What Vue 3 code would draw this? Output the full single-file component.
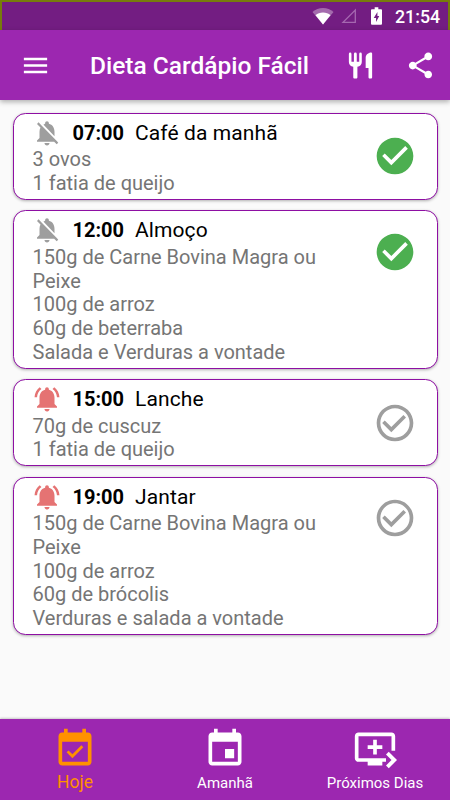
<template>
  <div class="screen">
    <div class="status-bar">
      <svg class="wifi" viewBox="0 0 22 18">
        <path d="M11 17.5L.5 5C3.5 2.200 7 1 11 1s7.500 1.200 10.500 4z" opacity=".35" />
        <path d="M11 17.500L3.500 8.300C5.500 6.500 8 5.500 11 5.500s5.500 1 7.500 2.800z" />
      </svg>
      <svg class="signal" viewBox="0 0 16 16">
        <path d="M14.300 2v12.300H2z" />
      </svg>
      <svg class="battery" viewBox="0 0 12 20">
        <path fill-rule="evenodd" d="M4 0h4v2h3c.6 0 1 .4 1 1v15c0 .6-.4 1-1 1H1c-.6 0-1-.4-1-1V3c0-.6.400-1 1-1h3zM7 5L3 11.500h2.500V16L9 9.500H7z" />
      </svg>
      <span class="clock">21:54</span>
    </div>

    <header class="app-bar">
      <svg class="icon" viewBox="0 0 24 24"><path :d="icons.menu" /></svg>
      <h1>Dieta Cardápio Fácil</h1>
      <svg class="icon food" viewBox="0 0 24 24"><path :d="icons.food" /></svg>
      <svg class="icon share" viewBox="0 0 24 24"><path :d="icons.share" /></svg>
    </header>

    <main class="meals">
      <section
        v-for="meal in meals"
        :key="meal.time"
        class="card"
        :class="{ tall: meal.items.length > 2 }"
      >
        <div class="info">
          <div class="title">
            <svg class="bell" :class="{ active: meal.alarm }" viewBox="0 0 24 24">
              <path :d="meal.alarm ? icons.bellOn : icons.bellOff" />
            </svg>
            <strong>{{ meal.time }}</strong>
            <span>{{ meal.name }}</span>
          </div>
          <p v-for="item in meal.items" :key="item">{{ item }}</p>
        </div>
        <svg class="check" :class="{ done: meal.done }" viewBox="0 0 24 24" @click="meal.done = !meal.done">
          <path :d="meal.done ? icons.checkFull : icons.checkOutline" />
        </svg>
      </section>
    </main>

    <nav class="tabs">
      <button
        v-for="tab in tabs"
        :key="tab.label"
        :class="{ selected: current === tab.label }"
        @click="current = tab.label"
      >
        <svg viewBox="0 0 24 24"><path :d="tab.icon" /></svg>
        <span>{{ tab.label }}</span>
      </button>
    </nav>
  </div>
</template>

<script setup>
import { ref } from 'vue';

const icons = {
  menu: 'M3 18h18v-2H3v2zm0-5h18v-2H3v2zm0-7v2h18V6H3z',
  food: 'M3 3a1 1 0 0 1 2 0v6h1.900V3a1.100 1 0 0 1 2.200 0v6H11V3a1 1 0 0 1 2 0v6.200c0 2-1.400 3.300-3.400 3.700V21c0 .6-.4 1-1 1H7.400c-.6 0-1-.4-1-1v-8.100C4.400 12.500 3 11.200 3 9.200zM16 6c0-2.200 2-4 4.300-4 .4 0 .7.3.7.700V21c0 .6-.4 1-1 1h-.8c-.6 0-1-.4-1-1v-7H16z',
  share: 'M18 16.08c-.76 0-1.44.3-1.96.77L8.91 12.7c.05-.23.09-.46.09-.7s-.04-.47-.09-.7l7.05-4.11c.54.5 1.25.81 2.04.81 1.66 0 3-1.34 3-3s-1.34-3-3-3-3 1.34-3 3c0 .24.04.47.09.7L8.040 9.810C7.500 9.310 6.790 9 6 9c-1.660 0-3 1.340-3 3s1.340 3 3 3c.790 0 1.500-.310 2.040-.810l7.120 4.160c-.05.21-.08.43-.08.65 0 1.610 1.310 2.920 2.920 2.920s2.920-1.310 2.920-2.920-1.310-2.920-2.920-2.920z',
  bellOn: 'M7.58 4.08L6.15 2.65C3.75 4.48 2.17 7.3 2.03 10.5h2c.15-2.65 1.51-4.970 3.550-6.420zm12.390 6.420h2c-.15-3.200-1.730-6.020-4.120-7.850l-1.420 1.430c2.020 1.450 3.390 3.770 3.540 6.420zM18 11c0-3.070-1.640-5.640-4.500-6.320V4c0-.83-.67-1.500-1.500-1.500s-1.500.67-1.500 1.500v.68C7.630 5.360 6 7.920 6 11v5l-2 2v1h16v-1l-2-2v-5zm-6 11c.14 0 .27-.01.400-.040.650-.140 1.180-.580 1.440-1.180.100-.240.150-.500.150-.780h-4c.010 1.100.900 2 2.010 2z',
  bellOff: 'M20 18.69L7.84 6.14 5.27 3.49 4 4.76l2.8 2.8v.01c-.52.99-.8 2.16-.8 3.420v5l-2 2v1h13.730l2 2L21 19.720l-1-1.030zM12 22c1.110 0 2-.890 2-2h-4c0 1.110.890 2 2 2zm6-7.320V11c0-3.080-1.640-5.640-4.500-6.320V4c0-.83-.67-1.500-1.500-1.500s-1.500.67-1.500 1.500v.68c-.15.03-.29.08-.42.12-.1.03-.2.07-.3.11h-.01c-.01 0-.01 0-.02.010-.23.090-.46.200-.68.310 0 0-.01 0-.01.010L18 14.680z',
  checkFull: 'M12 2C6.48 2 2 6.480 2 12s4.480 10 10 10 10-4.480 10-10S17.520 2 12 2zm-2 15l-5-5 1.410-1.410L10 14.170l7.590-7.590L19 8l-9 9z',
  checkOutline: 'M16.590 7.580L10 14.170l-3.590-3.580L5 12l5 5 8-8-1.410-1.420zM12 2C6.480 2 2 6.480 2 12s4.480 10 10 10 10-4.480 10-10S17.520 2 12 2zm0 18c-4.420 0-8-3.580-8-8s3.580-8 8-8 8 3.580 8 8-3.580 8-8 8z'
};

const meals = ref([
  { time: '07:00', name: 'Café da manhã', alarm: false, done: true, items: ['3 ovos', '1 fatia de queijo'] },
  {
    time: '12:00',
    name: 'Almoço',
    alarm: false,
    done: true,
    items: ['150g de Carne Bovina Magra ou Peixe', '100g de arroz', '60g de beterraba', 'Salada e Verduras a vontade']
  },
  { time: '15:00', name: 'Lanche', alarm: true, done: false, items: ['70g de cuscuz', '1 fatia de queijo'] },
  {
    time: '19:00',
    name: 'Jantar',
    alarm: true,
    done: false,
    items: ['150g de Carne Bovina Magra ou Peixe', '100g de arroz', '60g de brócolis', 'Verduras e salada a vontade']
  }
]);

const tabs = [
  {
    label: 'Hoje',
    icon: 'M16.530 11.060L15.470 10l-4.880 4.880-2.120-2.120-1.060 1.060L10.590 17l5.940-5.940zM19 3h-1V1h-2v2H8V1H6v2H5c-1.110 0-1.990.9-1.990 2L3 19c0 1.100.890 2 2 2h14c1.100 0 2-.9 2-2V5c0-1.100-.9-2-2-2zm0 16H5V8h14v11z'
  },
  {
    label: 'Amanhã',
    icon: 'M17 12h-5v5h5v-5zM16 1v2H8V1H6v2H5c-1.110 0-1.990.9-1.990 2L3 19c0 1.100.890 2 2 2h14c1.100 0 2-.9 2-2V5c0-1.100-.9-2-2-2h-1V1h-2zm3 18H5V8h14v11z'
  },
  {
    label: 'Próximos Dias',
    icon: 'M21 3H3c-1.110 0-2 .890-2 2v12c0 1.100.890 2 2 2h5v2h8v-2h2v-2H3V5h18v8h2V5c0-1.110-.9-2-2-2zm-8 7V7h-2v3H8v2h3v3h2v-3h3v-2h-3zm11 8l-4.500 4.500L18 21l3-3-3-3 1.500-1.500L24 18z'
  }
];
const current = ref('Hoje');
</script>

<style>
body {
  margin: 0;
}
</style>

<style scoped>
.screen {
  display: flex;
  flex-direction: column;
  width: 450px;
  height: 800px;
  overflow: hidden;
  background: #fafafa;
  font-family: Roboto, sans-serif;
}

svg {
  display: block;
  flex: none;
  fill: currentColor;
}

.status-bar {
  display: flex;
  align-items: center;
  box-sizing: border-box;
  height: 30px;
  padding: 0 8px 0 310px;
  border: 2px solid #777b0b;
  border-bottom: none;
  background: #731d82;
  color: #fff;
}

.wifi {
  width: 22px;
  height: 18px;
}

.signal {
  width: 16px;
  height: 16px;
  margin-left: 7px;
  fill: none;
  stroke: #a568b0;
  stroke-width: 1.3;
}

.battery {
  width: 11px;
  height: 19px;
  margin-left: 14px;
}

.clock {
  margin-left: 13px;
  font-size: 17.800px;
  font-weight: 500;
  line-height: 27px;
}

.app-bar {
  display: flex;
  align-items: center;
  flex: none;
  height: 70px;
  padding: 0 14.500px 0 19.500px;
  background: #9c27b0;
  color: #fff;
  box-shadow: 0 2px 5px rgba(0, 0, 0, 0.3);
}

.app-bar h1 {
  flex: 1;
  margin: 1px 0 0 39.500px;
  font-size: 24.500px;
  font-weight: 500;
  line-height: 28px;
  white-space: nowrap;
}

.icon {
  width: 31px;
  height: 31px;
}

.share {
  margin-left: 29px;
}

.meals {
  display: flex;
  flex: 1;
  flex-direction: column;
  gap: 10.500px;
  padding: 12.700px 12.500px 0;
}

.card {
  display: flex;
  justify-content: space-between;
  box-sizing: border-box;
  height: 87.100px;
  padding: 5px 19.500px 0 19px;
  border: 1.250px solid #8e0fa3;
  border-radius: 12.500px;
  background: #fff;
  box-shadow: 0 1px 3px rgba(0, 0, 0, 0.3);
}

.card.tall {
  height: 158.300px;
}

.info {
  width: 310px;
}

.title {
  display: flex;
  align-items: center;
  height: 29px;
  margin: -0.500px 0 1px;
  font-size: 21px;
  letter-spacing: 0.100px;
}

.title strong {
  width: 62.500px;
  margin-left: 10.500px;
  font-size: 20px;
  font-weight: 700;
  letter-spacing: 0;
}

.info p {
  margin: 0;
  color: #757575;
  font-size: 20px;
  font-weight: 400;
  line-height: 23.750px;
}

.bell {
  width: 30px;
  height: 30px;
  margin-left: -0.500px;
  color: #9e9e9e;
}

.bell.active {
  color: #e57373;
}

.check {
  width: 44px;
  height: 44px;
  margin-top: 15.500px;
  color: #9e9e9e;
}

.tall .check {
  margin-top: 13.500px;
}

.check.done {
  color: #4caf50;
}

.tabs {
  display: grid;
  grid-template-columns: repeat(3, 1fr);
  height: 81px;
  background: #9c27b0;
  box-shadow: 0 -1px 2px rgba(0, 0, 0, 0.2);
}

.tabs button {
  display: flex;
  flex-direction: column;
  align-items: center;
  padding: 8px 0 0;
  border: none;
  background: none;
  color: #fff;
  font: 15px Roboto, sans-serif;
}

.tabs svg {
  width: 44px;
  height: 44px;
}

.tabs span {
  line-height: 24px;
}

.tabs .selected {
  color: #ff9100;
  font-size: 17.500px;
}

.tabs .selected span {
  line-height: 22px;
}
</style>
